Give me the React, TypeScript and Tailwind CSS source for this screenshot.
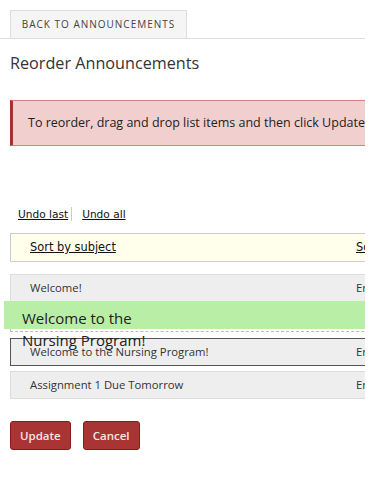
import React from "react";

const rowCls =
   "flex items-center h-[28px] border bg-[#eeeeee] text-[11.3px] text-[#333]";

export default function App() {
   return (
      <div className="w-[365px] h-[495px] overflow-hidden bg-white font-['Open_Sans',sans-serif]">
         <div className="w-[560px] relative">
            <div className="border-b border-[#dddddd] h-[39px] pt-[10px] pl-[10px]">
               <button className="h-[28px] w-[177px] bg-[#f5f5f5] border border-b-0 border-[#dddddd] text-[10px] tracking-[1px] text-[#444] uppercase">
                  Back to Announcements
               </button>
            </div>
            <h1 className="mt-[12px] ml-[10px] text-[16.2px] leading-[24px] text-[#333]">
               Reorder Announcements
            </h1>
            <div className="mt-[25px] ml-[10px] h-[46px] flex items-center bg-[#f2cfcf] border border-[#d88080] border-l-[3px] border-l-[#a83232] pl-[15px] text-[12.5px] text-[#222]">
               To reorder, drag and drop list items and then click Update to save changes.
            </div>
            <div className="mt-[61px] ml-[18px] flex items-center text-[10.6px] leading-[14px] text-[#111] font-['DejaVu_Sans',Verdana,sans-serif]">
               <a className="underline pr-[3px] border-r border-[#ccc]">Undo last</a>
               <a className="underline ml-[10px]">Undo all</a>
            </div>
            <div className="mt-[12px] ml-[10px] h-[29px] flex items-center bg-[#ffffec] border border-[#cccccc] text-[11.4px] text-[#111] font-['DejaVu_Sans',Verdana,sans-serif]">
               <a className="underline w-[345px] pl-[19px]">Sort by subject</a>
               <a className="underline">Sort by availability</a>
            </div>
            <div className="mt-[12px] ml-[10px] flex flex-col">
               <div className={`${rowCls} border-[#dddddd]`}>
                  <span className="w-[345px] pl-[19px]">Welcome!</span>
                  <span>Entire course</span>
               </div>
               <div className="mt-[1px] h-[29px] border border-dashed border-[#bbbbbb]" />
               <div className={`${rowCls} mt-[6px] border-[#555555]`}>
                  <span className="w-[345px] pl-[19px]">Welcome to the Nursing Program!</span>
                  <span>Entire course</span>
               </div>
               <div className={`${rowCls} mt-[5px] border-[#dddddd]`}>
                  <span className="w-[345px] pl-[19px]">Assignment 1 Due Tomorrow</span>
                  <span>Entire course</span>
               </div>
            </div>
            <div className="absolute left-[4px] top-[301px] w-[520px] h-[28px] bg-[#b9eea7]">
               <div className="w-[170px] pl-[18px] pt-[6px] text-[15px] leading-[22px] text-[#222]">
                  Welcome to the Nursing Program!
               </div>
            </div>
            <div className="mt-[22px] ml-[10px] flex gap-[12px]">
               <button className="h-[29px] px-[9px] bg-[#a83434] border border-[#8a1a1a] rounded-[3px] text-[11.5px] font-semibold text-[#f3e6e6]">
                  Update
               </button>
               <button className="h-[29px] px-[9px] bg-[#a83434] border border-[#8a1a1a] rounded-[3px] text-[11.5px] font-semibold text-[#f3e6e6]">
                  Cancel
               </button>
            </div>
         </div>
      </div>
   );
}
